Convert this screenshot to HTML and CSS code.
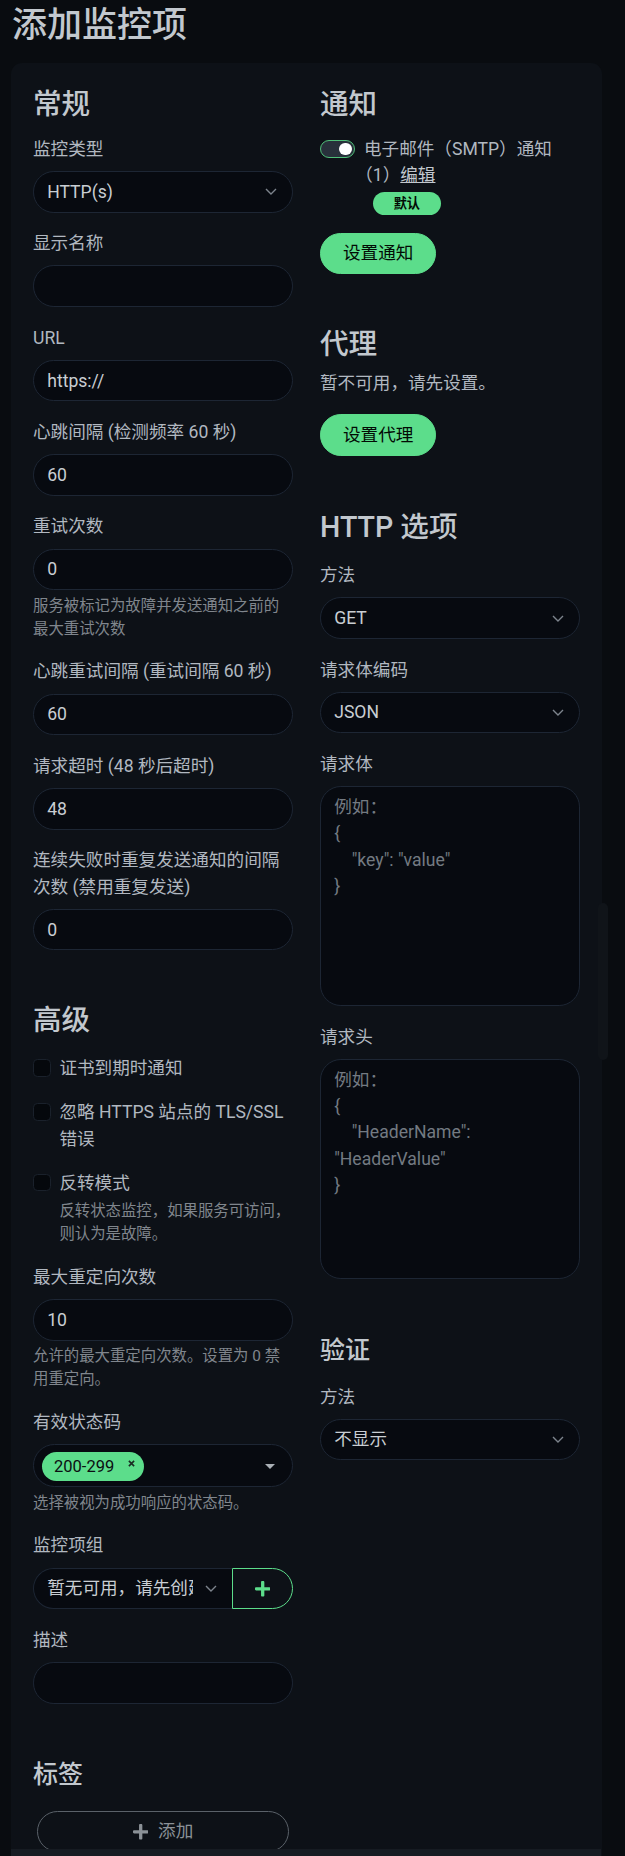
FILE: index.html
```html
<!DOCTYPE html>
<html lang="zh-CN">
<head>
<meta charset="utf-8">
<title>添加监控项</title>
<link rel="stylesheet" href="styles.css">
</head>
<body>
<div class="page">
  <h1 class="title">添加监控项</h1>
  <div class="card">
    <div class="cols">
      <div class="col">
        <h2 class="h2">常规</h2>
        <div class="field">
          <label class="label">监控类型</label>
          <div class="select"><span class="select-text">HTTP(s)</span><svg class="chev" viewBox="0 0 12 7"><path d="M1 1l5 5 5-5"/></svg></div>
        </div>
        <div class="field">
          <label class="label">显示名称</label>
          <input class="input" type="text" value="">
        </div>
        <div class="field">
          <label class="label">URL</label>
          <input class="input" type="text" value="https://">
        </div>
        <div class="field">
          <label class="label">心跳间隔 (检测频率 60 秒)</label>
          <input class="input" type="text" value="60">
        </div>
        <div class="field">
          <label class="label">重试次数</label>
          <input class="input" type="text" value="0">
          <div class="help">服务被标记为故障并发送通知之前的最大重试次数</div>
        </div>
        <div class="field">
          <label class="label">心跳重试间隔 (重试间隔 60 秒)</label>
          <input class="input" type="text" value="60">
        </div>
        <div class="field">
          <label class="label">请求超时 (48 秒后超时)</label>
          <input class="input" type="text" value="48">
        </div>
        <div class="field">
          <label class="label">连续失败时重复发送通知的间隔次数 (禁用重复发送)</label>
          <input class="input" type="text" value="0">
        </div>

        <h2 class="h2 mt5">高级</h2>
        <div class="check">
          <span class="box"></span>
          <div class="check-body"><label class="check-label">证书到期时通知</label></div>
        </div>
        <div class="check">
          <span class="box"></span>
          <div class="check-body"><label class="check-label">忽略 HTTPS 站点的 TLS/SSL 错误</label></div>
        </div>
        <div class="check">
          <span class="box"></span>
          <div class="check-body">
            <label class="check-label">反转模式</label>
            <div class="help">反转状态监控，如果服务可访问，则认为是故障。</div>
          </div>
        </div>
        <div class="field">
          <label class="label">最大重定向次数</label>
          <input class="input" type="text" value="10">
          <div class="help">允许的最大重定向次数。设置为 0 禁用重定向。</div>
        </div>
        <div class="field">
          <label class="label">有效状态码</label>
          <div class="multi">
            <span class="tag">200-299<svg class="tag-x" viewBox="0 0 8 8"><path d="M1 1l6 6M7 1L1 7"/></svg></span>
            <svg class="caret" viewBox="0 0 10 5"><path d="M0 0h10L5 5z"/></svg>
          </div>
          <div class="help">选择被视为成功响应的状态码。</div>
        </div>
        <div class="field">
          <label class="label">监控项组</label>
          <div class="group">
            <div class="select group-select"><span class="select-text clip">暂无可用，请先创建监控项组</span><svg class="chev" viewBox="0 0 12 7"><path d="M1 1l5 5 5-5"/></svg></div>
            <button class="group-btn" type="button"><svg class="plus" viewBox="0 0 448 512"><path d="M416 208H272V64c0-17.67-14.33-32-32-32h-32c-17.67 0-32 14.33-32 32v144H32c-17.67 0-32 14.33-32 32v32c0 17.67 14.33 32 32 32h144v144c0 17.67 14.33 32 32 32h32c17.67 0 32-14.33 32-32V304h144c17.67 0 32-14.33 32-32v-32c0-17.67-14.33-32-32-32z"/></svg></button>
          </div>
        </div>
        <div class="field">
          <label class="label">描述</label>
          <input class="input" type="text" value="">
        </div>
        <div class="tags">
          <h4 class="h4 tags-title">标签</h4>
          <div class="tags-add">
            <button class="btn-add" type="button"><svg class="plus-add" viewBox="0 0 448 512"><path d="M416 208H272V64c0-17.67-14.33-32-32-32h-32c-17.67 0-32 14.33-32 32v144H32c-17.67 0-32 14.33-32 32v32c0 17.67 14.33 32 32 32h144v144c0 17.67 14.33 32 32 32h32c17.67 0 32-14.33 32-32V304h144c17.67 0 32-14.33 32-32v-32c0-17.67-14.33-32-32-32z"/></svg><span>添加</span></button>
          </div>
        </div>
      </div>

      <div class="col">
        <h2 class="h2">通知</h2>
        <div class="notif">
          <span class="switch"><span class="knob"></span></span>
          <div class="notif-body"><label class="notif-label">电子邮件（SMTP）通知（1）<a class="link" href="#">编辑</a></label><span class="badge">默认</span></div>
        </div>
        <button class="btn" type="button">设置通知</button>

        <h2 class="h2 mt5">代理</h2>
        <p class="para">暂不可用，请先设置。</p>
        <button class="btn" type="button">设置代理</button>

        <h2 class="h2 mt5 http-title">HTTP 选项</h2>
        <div class="field">
          <label class="label">方法</label>
          <div class="select"><span class="select-text">GET</span><svg class="chev" viewBox="0 0 12 7"><path d="M1 1l5 5 5-5"/></svg></div>
        </div>
        <div class="field">
          <label class="label">请求体编码</label>
          <div class="select"><span class="select-text">JSON</span><svg class="chev" viewBox="0 0 12 7"><path d="M1 1l5 5 5-5"/></svg></div>
        </div>
        <div class="field">
          <label class="label">请求体</label>
          <textarea class="textarea" placeholder="例如：&#10;{&#10;    &quot;key&quot;: &quot;value&quot;&#10;}"></textarea>
        </div>
        <div class="field">
          <label class="label">请求头</label>
          <textarea class="textarea" placeholder="例如：&#10;{&#10;    &quot;HeaderName&quot;: &quot;HeaderValue&quot;&#10;}"></textarea>
        </div>

        <h4 class="h4 mt5 auth-title">验证</h4>
        <div class="field">
          <label class="label">方法</label>
          <div class="select"><span class="select-text">不显示</span><svg class="chev" viewBox="0 0 12 7"><path d="M1 1l5 5 5-5"/></svg></div>
        </div>
      </div>
    </div>
  </div>
</div>
<div class="scroll-thumb"></div>
<div class="bottom-bar"></div>
</body>
</html>
```
FILE: styles.css
```css
* {
  box-sizing: border-box;
}

html,
body {
  margin: 0;
  padding: 0;
}

body {
  background: #090c10;
  color: #b1b8c0;
  font-family: Roboto, "Noto Sans CJK SC", sans-serif;
  font-size: 17.6px;
  line-height: 26.4px;
  overflow: hidden;
}

.page {
  padding: 5px 23px 0 11px;
}

.title {
  margin: 0 0 16px 1px;
  font-size: 35px;
  line-height: 42px;
  font-weight: 500;
  color: #c2c8ce;
}

.card {
  background: #0d1117;
  border-radius: 11px;
  padding: 24px 22px 60px;
}

.cols {
  display: grid;
  grid-template-columns: 1fr 1fr;
  column-gap: 27px;
}

.col {
  min-width: 0;
}

.h2 {
  margin: 0 0 8.8px;
  font-size: 28.6px;
  line-height: 34.3px;
  font-weight: 500;
  color: #c2c8ce;
}

.h4 {
  margin: 0 0 17.6px;
  font-size: 25px;
  line-height: 30px;
  font-weight: 500;
  color: #c2c8ce;
}

.mt5 {
  margin-top: 52.8px;
}

.http-title {
  margin-top: 54.5px;
}

.auth-title {
  margin-top: 57px;
}

.field {
  margin: 17.6px 0;
}

.h2:first-child + .field,
.h2:first-child + .notif {
  margin-top: 14.6px;
}

.label {
  display: block;
  margin-bottom: 8.8px;
}

.input,
.select {
  display: block;
  width: 100%;
  height: 41.6px;
  padding: 0 13.2px;
  border: 1px solid #1d2634;
  border-radius: 20.9px;
  background: #070a10;
  color: #c9ced3;
  font: inherit;
  outline: none;
}

.select {
  display: flex;
  align-items: center;
  justify-content: space-between;
  padding-right: 15px;
}

.select-text {
  white-space: nowrap;
}

.chev {
  width: 12px;
  height: 7px;
  flex: none;
  fill: none;
  stroke: #7d848d;
  stroke-width: 1.4;
}

.help {
  margin-top: 4.4px;
  font-size: 15.4px;
  line-height: 23.1px;
  color: #80868d;
}

.check {
  display: flex;
  gap: 8.8px;
  margin: 17.6px 0;
}

.box {
  flex: none;
  width: 17.6px;
  height: 17.6px;
  margin-top: 4.4px;
  border: 1px solid #1a212b;
  border-radius: 4.4px;
  background: #05080c;
}

.check-body {
  min-width: 0;
}

.check-label {
  display: block;
}

.multi {
  display: flex;
  align-items: center;
  justify-content: space-between;
  height: 43px;
  padding: 1px 17px 0 8px;
  border: 1px solid #1d2634;
  border-radius: 21.5px;
  background: #070a10;
}

.tag {
  display: inline-flex;
  align-items: center;
  gap: 14px;
  height: 29px;
  padding: 0 9px 0 12px;
  border-radius: 14.5px;
  background: #5cdd8b;
  color: #0b0f12;
  font-size: 16.5px;
  line-height: 29px;
}

.tag-x {
  width: 7px;
  height: 7px;
  margin-top: -6px;
  fill: none;
  stroke: #1a2a22;
  stroke-width: 1.8;
}

.caret {
  width: 10px;
  height: 5px;
  fill: #aab0b6;
}

.group {
  display: flex;
}

.group-select {
  flex: 1;
  min-width: 0;
  border-radius: 20.9px 0 0 20.9px;
  border-right: none;
  padding-right: 15px;
}

.clip {
  flex: 1;
  min-width: 0;
  overflow: hidden;
  margin-right: 12px;
}

.group-btn {
  flex: none;
  display: flex;
  align-items: center;
  justify-content: center;
  width: 61px;
  height: 41.6px;
  padding: 0;
  border: 1px solid #5cdd8b;
  border-radius: 0 20.9px 20.9px 0;
  background: transparent;
}

.plus {
  width: 15.4px;
  height: 17.6px;
  fill: #5cdd8b;
}

.tags {
  margin: 56px 0 0;
}

.tags-title {
  margin-bottom: 21px;
}

.tags-add {
  padding: 0 4.4px;
}

.btn-add {
  display: flex;
  align-items: center;
  justify-content: center;
  gap: 10px;
  width: 100%;
  height: 41.6px;
  padding: 0;
  border: 1px solid #5a6169;
  border-radius: 20.9px;
  background: transparent;
  color: #8b9197;
  font: inherit;
}

.plus-add {
  width: 15.4px;
  height: 17.6px;
  fill: #8b9197;
}

.notif {
  display: flex;
  gap: 8.8px;
  margin: 17.6px 0;
}

.switch {
  flex: none;
  display: flex;
  align-items: center;
  justify-content: flex-end;
  width: 35.2px;
  height: 17.6px;
  margin-top: 4.4px;
  padding-right: 2.5px;
  border: 1px solid #4fbf78;
  border-radius: 9px;
  background: #28313b;
}

.knob {
  width: 12.4px;
  height: 12.4px;
  border-radius: 50%;
  background: #ffffff;
}

.notif-body {
  min-width: 0;
}

.notif-label {
  display: inline-block;
  text-spacing-trim: trim-start;
}

.link {
  color: #c2c8ce;
  text-decoration: underline;
}

.badge {
  display: inline-block;
  min-width: 68.2px;
  margin-left: 8.8px;
  padding: 4.6px 8.6px;
  border-radius: 12px;
  background: #5cdd8b;
  color: #020b05;
  font-size: 13.2px;
  line-height: 13.2px;
  font-weight: 700;
  text-align: center;
}

.btn {
  display: block;
  height: 41.6px;
  padding: 0 22px;
  border: 1px solid #5cdd8b;
  border-radius: 20.9px;
  background: #5cdd8b;
  color: #020b05;
  font: inherit;
}

.para {
  margin: 0 0 17.6px;
}

.textarea {
  display: block;
  width: 100%;
  height: 220px;
  padding: 6.6px 13.2px;
  border: 1px solid #1d2634;
  border-radius: 20.9px;
  background: #070a10;
  color: #c9ced3;
  font: inherit;
  resize: none;
  outline: none;
}

.textarea::placeholder {
  color: #737a82;
}

.scroll-thumb {
  position: fixed;
  left: 598px;
  top: 903px;
  width: 10px;
  height: 157px;
  border-radius: 5px;
  background: #101419;
}

.bottom-bar {
  position: fixed;
  left: 11px;
  right: 24px;
  bottom: 0;
  height: 7px;
  background: #161b22;
}
```
